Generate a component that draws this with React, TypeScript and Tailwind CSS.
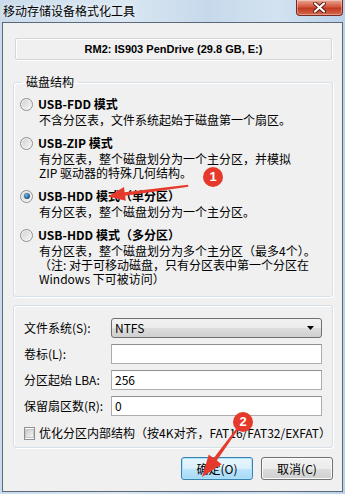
import React from 'react';

const CJK = "font-['Noto_Sans_CJK_SC','Noto_Sans',sans-serif]";

const MODES = [
  { title: 'USB-FDD 模式', desc: ['不含分区表，文件系统起始于磁盘第一个扇区。'], checked: false },
  { title: 'USB-ZIP 模式', desc: ['有分区表，整个磁盘划分为一个主分区，并模拟', 'ZIP 驱动器的特殊几何结构。'], checked: false },
  { title: 'USB-HDD 模式（单分区）', desc: ['有分区表，整个磁盘划分为一个主分区。'], checked: true },
  {
    title: 'USB-HDD 模式（多分区）',
    desc: ['有分区表，整个磁盘划分为多个主分区（最多4个）。', '（注: 对于可移动磁盘，只有分区表中第一个分区在', 'Windows 下可被访问）'],
    checked: false,
  },
];

function Radio({ checked }: { checked: boolean }) {
  return (
    <span className="flex h-[13px] w-[13px] shrink-0 items-center justify-center rounded-full border border-[#8e8f8f] bg-[linear-gradient(135deg,#cfcfcf,#f9f9f9)] shadow-[inset_0_0_0_1px_#f4f4f4]">
      {checked && <span className="h-[6px] w-[6px] rounded-full bg-[radial-gradient(circle_at_40%_35%,#6cb8ec,#14497a_75%)]" />}
    </span>
  );
}

function TextBox({ value }: { value?: string }) {
  return (
    <div className="flex h-[20px] w-[211px] items-center border border-[#abadb3] border-t-[#8c8f94] bg-white pl-[3px] text-[12px]">
      {value}
    </div>
  );
}

export default function App() {
  return (
    <div className={`relative h-[494px] w-[345px] overflow-hidden bg-[linear-gradient(90deg,#c9dbec,#dbe7f2_35%,#c6d9eb_60%,#d3e2f0_80%,#b9d1e8)] text-black ${CJK}`}>
      {/* 标题栏 */}
      <div className="flex h-[22px] items-start justify-between">
        <span className="pl-[3px] text-[12px] leading-[22px] [text-shadow:0_0_6px_#fff]">移动存储设备格式化工具</span>
        <div className="mr-[2px] flex h-[16px] w-[47px] items-center justify-center rounded-b-[4px] border border-t-0 border-[#7a2a20] bg-[linear-gradient(180deg,#e9a896,#d4573f_45%,#c13a22_55%,#d46a4c)] shadow-[inset_0_0_0_1px_rgba(255,255,255,0.35)]">
          <svg width="13" height="11" viewBox="0 0 13 11">
            <path d="M2 1.5 L11 9.5 M11 1.5 L2 9.5" stroke="#5a1a10" strokeWidth="4" strokeLinecap="round" />
            <path d="M2 1.5 L11 9.5 M11 1.5 L2 9.5" stroke="#fff" strokeWidth="2.2" strokeLinecap="round" />
          </svg>
        </div>
      </div>

      {/* 客户区 */}
      <div className="ml-[2px] h-[470px] w-[341px] border border-[#5b6877] bg-[#f0f0f0]">
        <div className="ml-[12px] mr-[10px] mt-[15px] flex h-[22px] items-center justify-center rounded-[2px] border border-[#d5d5d5] shadow-[inset_1px_1px_0_#fff,1px_1px_0_#fff] font-['Liberation_Sans',sans-serif] text-[11px] font-bold">
          RM2: IS903 PenDrive (29.8 GB, E:)
        </div>

        <fieldset className="ml-[10px] mr-[9px] mt-[14px] rounded-[3px] border border-[#d5dfe5] pb-[10px] pl-[6px] pt-[6px] shadow-[inset_1px_1px_0_#fff,1px_1px_0_#fff]">
          <legend className="ml-[2px] px-[4px] text-[12px] leading-[16px]">磁盘结构</legend>
          <div className="flex flex-col gap-[8px]">
            {MODES.map((m) => (
              <div key={m.title}>
                <div className="flex h-[16px] items-center gap-[5px]">
                  <Radio checked={m.checked} />
                  <span className="text-[12px] font-bold leading-[16px]">{m.title}</span>
                </div>
                <div className="mt-px pl-[19px] text-[12px] leading-[14px]">
                  {m.desc.map((d) => (
                    <div key={d} className="whitespace-nowrap">{d}</div>
                  ))}
                </div>
              </div>
            ))}
          </div>
        </fieldset>

        <div className="ml-[10px] mr-[9px] mt-[8px] flex flex-col gap-[6px] rounded-[3px] border border-[#d5dfe5] pb-[6px] pl-[10px] pr-[10px] pt-[12px] shadow-[inset_1px_1px_0_#fff,1px_1px_0_#fff]">
          <div className="flex h-[20px] items-center">
            <span className="w-[87px] text-[12px]">文件系统(S):</span>
            <div className="flex h-[20px] w-[211px] items-center justify-between rounded-[3px] border border-[#707070] bg-[linear-gradient(180deg,#f2f2f2,#ebebeb_50%,#dddddd_50%,#cfcfcf)] pl-[3px] pr-[7px] text-[12px]">
              <span>NTFS</span>
              <svg width="7" height="4" viewBox="0 0 7 4">
                <path d="M0 0 L7 0 L3.5 4 Z" fill="#000" />
              </svg>
            </div>
          </div>
          <div className="flex h-[20px] items-center">
            <span className="w-[87px] text-[12px]">卷标(L):</span>
            <TextBox />
          </div>
          <div className="flex h-[20px] items-center">
            <span className="w-[87px] text-[12px]">分区起始 LBA:</span>
            <TextBox value="256" />
          </div>
          <div className="flex h-[20px] items-center">
            <span className="w-[87px] text-[12px]">保留扇区数(R):</span>
            <TextBox value="0" />
          </div>
          <div className="mt-[3px] flex h-[16px] items-center gap-[4px]">
            <span className="flex h-[13px] w-[13px] items-center justify-center border border-[#8e8f8f] bg-white">
              <span className="h-[9px] w-[9px] border border-[#c6c6c6] bg-[linear-gradient(135deg,#cbcbcb,#f6f6f6)]" />
            </span>
            <span className="whitespace-nowrap text-[12px] leading-[16px]">优化分区内部结构（按4K对齐，FAT16/FAT32/EXFAT）</span>
          </div>
        </div>

        <div className="mt-[9px] flex justify-end gap-[8px] pr-[9px]">
          <button className="flex h-[23px] w-[72px] items-center justify-center rounded-[3px] border border-[#3c7fb1] bg-[linear-gradient(180deg,#eaf6fd,#d9f0fc_50%,#bee6fd_50%,#a7d9f5)] text-[12px] shadow-[inset_0_0_0_1px_#a9e4fd]">
            确定(O)
          </button>
          <button className="flex h-[23px] w-[72px] items-center justify-center rounded-[3px] border border-[#707070] bg-[linear-gradient(180deg,#f2f2f2,#ebebeb_50%,#dddddd_50%,#cfcfcf)] text-[12px] shadow-[inset_0_0_0_1px_#fcfcfc]">
            取消(C)
          </button>
        </div>
      </div>

      {/* 标注 */}
      <svg className="pointer-events-none absolute left-0 top-0" width="345" height="494" viewBox="0 0 345 494">
        <polygon points="108,196.5 124,187 124.6,192.3 188,184.8 188.4,186.8 125.2,195.8 125.8,200.8" fill="#e5392b" />
        <polygon points="202,477 208.8,454.6 213.6,458.2 237.2,427.4 238.8,428.6 216.8,460.6 221.6,464.2" fill="#e5392b" />
      </svg>
      <div className="absolute left-[203px] top-[167px] flex h-[20px] w-[20px] items-center justify-center rounded-full bg-[#e5392b] font-['Liberation_Sans',sans-serif] text-[13px] font-bold text-white">
        1
      </div>
      <div className="absolute left-[233px] top-[412px] flex h-[20px] w-[20px] items-center justify-center rounded-full bg-[#e5392b] font-['Liberation_Sans',sans-serif] text-[13px] font-bold text-white">
        2
      </div>
    </div>
  );
}
